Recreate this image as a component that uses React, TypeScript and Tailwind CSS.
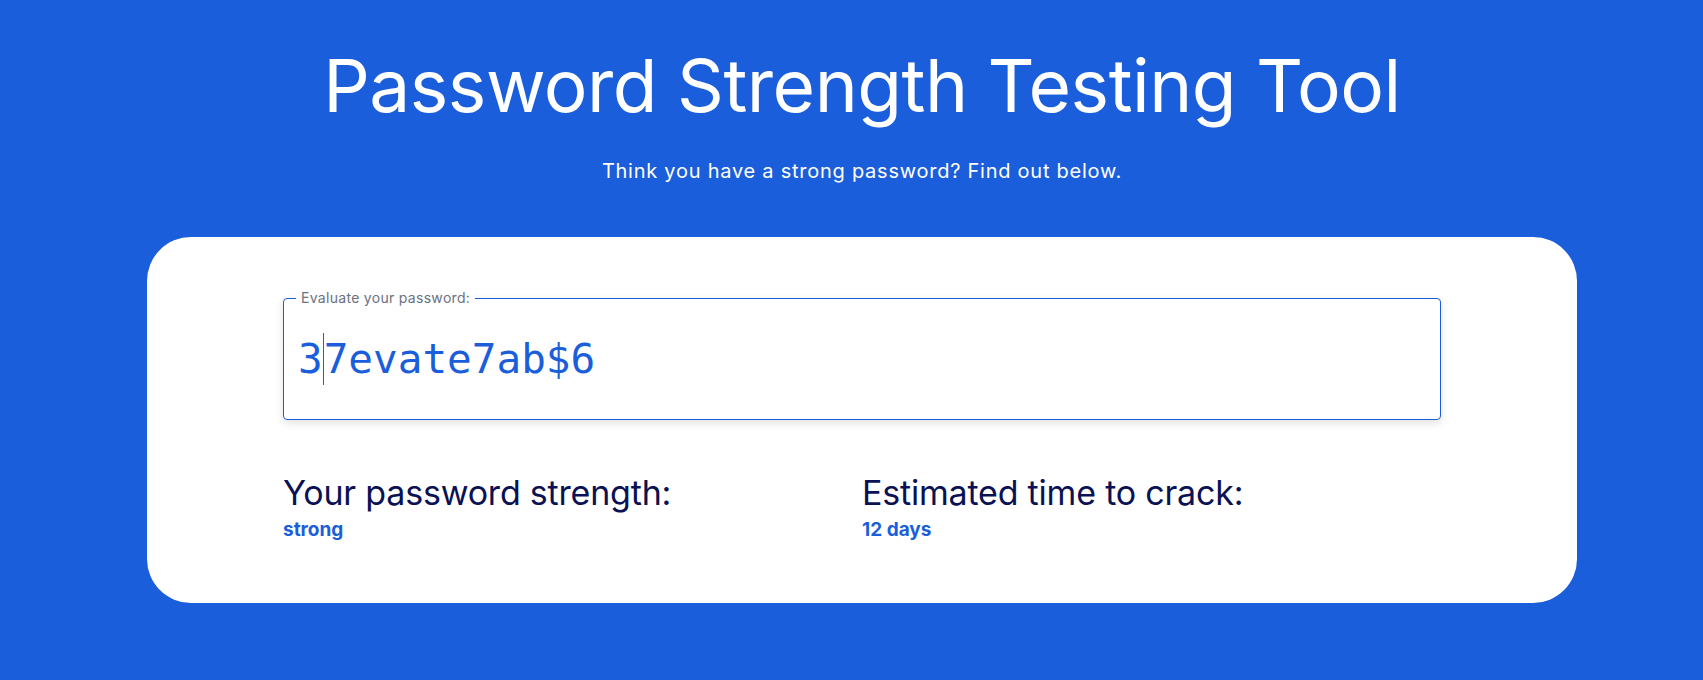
export default function App() {
  const password = "37evate7ab$6";
  const cursorAt = 1;

  return (
    <div className="min-h-[680px] w-full bg-[#1b5edb] pb-[77px] font-['Inter','Liberation_Sans',sans-serif]">
      <header className="ml-[147px] w-[1430px] pt-[41px] text-center text-white">
        <h1 className="text-[73px] leading-[90px] font-normal tracking-[-0.5px]">
          Password Strength Testing Tool
        </h1>
        <p className="mt-[28px] text-[20px] leading-[24px] tracking-[0.75px]">
          Think you have a strong password? Find out below.
        </p>
      </header>

      <main className="mt-[54px] ml-[147px] w-[1430px] rounded-[44px] bg-white px-[136px] pt-[53px] pb-[61px]">
        <fieldset className="h-[130px] rounded-[4px] border border-[#1b5edb] pl-[12px] shadow-[0_3px_8px_rgba(0,0,0,0.12)]">
          <legend className="px-[5px] text-[14px] leading-[16px] tracking-[0.3px] text-[#6b7280]">
            Evaluate your password:
          </legend>
          <div className="mt-[27px] flex items-center pl-[2px] font-['DejaVu_Sans_Mono',monospace] text-[41px] leading-[52px] text-[#1b5edb]">
            <span>{password.slice(0, cursorAt)}</span>
            <span className="h-[52px] w-px bg-[#1b5edb]" />
            <span>{password.slice(cursorAt)}</span>
          </div>
        </fieldset>

        <div className="mt-[53px] grid grid-cols-2">
          <div>
            <h2 className="text-[34px] leading-[40px] tracking-[-0.2px] text-[#0a1154]">Your password strength:</h2>
            <p className="mt-[5px] text-[19px] leading-[24px] font-bold text-[#1b5edb]">strong</p>
          </div>
          <div>
            <h2 className="text-[34px] leading-[40px] tracking-[-0.2px] text-[#0a1154]">Estimated time to crack:</h2>
            <p className="mt-[5px] text-[19px] leading-[24px] font-bold text-[#1b5edb]">12 days</p>
          </div>
        </div>
      </main>
    </div>
  );
}
